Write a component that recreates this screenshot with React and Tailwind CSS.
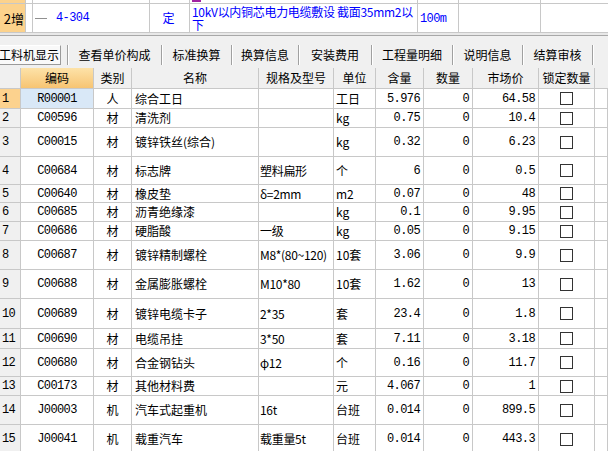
import React from "react";

const rows = [
  { n: "1", code: "R00001", t: "人", name: "综合工日", spec: "", unit: "工日", qty: "5.976", num: "0", price: "64.58", h: "h-[20px]", sel: true },
  { n: "2", code: "C00596", t: "材", name: "清洗剂", spec: "", unit: "kg", qty: "0.75", num: "0", price: "10.4", h: "h-[19px]" },
  { n: "3", code: "C00015", t: "材", name: "镀锌铁丝(综合)", spec: "", unit: "kg", qty: "0.32", num: "0", price: "6.23", h: "h-[29px]" },
  { n: "4", code: "C00684", t: "材", name: "标志牌", spec: "塑料扁形", unit: "个", qty: "6", num: "0", price: "0.5", h: "h-[28px]" },
  { n: "5", code: "C00640", t: "材", name: "橡皮垫", spec: "δ=2mm", unit: "m2", qty: "0.07", num: "0", price: "48", h: "h-[18px]" },
  { n: "6", code: "C00685", t: "材", name: "沥青绝缘漆", spec: "", unit: "kg", qty: "0.1", num: "0", price: "9.95", h: "h-[19px]" },
  { n: "7", code: "C00686", t: "材", name: "硬脂酸", spec: "一级", unit: "kg", qty: "0.05", num: "0", price: "9.15", h: "h-[19px]" },
  { n: "8", code: "C00687", t: "材", name: "镀锌精制螺栓", spec: "M8*(80~120)", unit: "10套", qty: "3.06", num: "0", price: "9.9", h: "h-[29px]" },
  { n: "9", code: "C00688", t: "材", name: "金属膨胀螺栓", spec: "M10*80", unit: "10套", qty: "1.62", num: "0", price: "13", h: "h-[29px]" },
  { n: "10", code: "C00689", t: "材", name: "镀锌电缆卡子", spec: "2*35", unit: "套", qty: "23.4", num: "0", price: "1.8", h: "h-[30px]" },
  { n: "11", code: "C00690", t: "材", name: "电缆吊挂", spec: "3*50", unit: "套", qty: "7.11", num: "0", price: "3.18", h: "h-[20px]" },
  { n: "12", code: "C00680", t: "材", name: "合金钢钻头", spec: "φ12", unit: "个", qty: "0.16", num: "0", price: "11.7", h: "h-[28px]" },
  { n: "13", code: "C00173", t: "材", name: "其他材料费", spec: "", unit: "元", qty: "4.067", num: "0", price: "1", h: "h-[19px]" },
  { n: "14", code: "J00003", t: "机", name: "汽车式起重机", spec: "16t", unit: "台班", qty: "0.014", num: "0", price: "899.5", h: "h-[29px]" },
  { n: "15", code: "J00041", t: "机", name: "载重汽车", spec: "载重量5t", unit: "台班", qty: "0.014", num: "0", price: "443.3", h: "h-[29px]" },
];

const tabs = [
  { label: "查看单价构成", w: "w-[94px]" },
  { label: "标准换算", w: "w-[70px]" },
  { label: "换算信息", w: "w-[67px]" },
  { label: "安装费用", w: "w-[73px]" },
  { label: "工程量明细", w: "w-[81px]" },
  { label: "说明信息", w: "w-[70px]" },
  { label: "结算审核", w: "w-[70px]" },
];

const mono = "font-['Liberation_Mono','Noto_Sans_CJK_SC',monospace] text-[12px] tracking-[-0.6px]";
const cell = "h-full flex items-center border-r border-[#c8c8c8] shrink-0 overflow-hidden whitespace-nowrap";

const App = () => {
  return (
    <div className="w-[608px] h-[451px] overflow-hidden bg-white text-[12px] leading-none text-black font-['Noto_Sans_CJK_SC',sans-serif]">

      {/* top quota row */}
      <div className="flex h-[4px] border-b border-[#c8c8c8]">
        <div className="w-[26px] border-r border-[#c8c8c8] bg-[#fcd28c]"></div>
        <div className="w-[7px] border-r border-[#c8c8c8]"></div>
        <div className="w-[117px] border-r border-[#c8c8c8]"></div>
        <div className="w-[40px] border-r border-[#c8c8c8]"></div>
        <div className="w-[228px] border-r border-[#c8c8c8] pl-[2px]">
          <div className="w-[9px] h-[2px] bg-[#a020a0]"></div>
        </div>
        <div className="w-[41px] border-r border-[#c8c8c8]"></div>
        <div className="w-[82px] border-r border-[#c8c8c8]"></div>
        <div className="flex-1"></div>
      </div>
      <div className="flex h-[29px] border-b border-[#c8c8c8] text-[#0000ff]">
        <div className="w-[26px] border-r border-[#c8c8c8] bg-[#fcd28c] flex items-center justify-end pr-[1px] overflow-hidden whitespace-nowrap text-black">
          <span className="text-[13px]">2增</span>
        </div>
        <div className="w-[7px] border-r border-[#c8c8c8]"></div>
        <div className="w-[117px] border-r border-[#c8c8c8] flex items-center pl-[2px] gap-[9px]">
          <div className="w-[12px] h-px bg-[#909090]"></div>
          <span className={mono}>4-304</span>
        </div>
        <div className="w-[40px] border-r border-[#c8c8c8] flex items-center justify-center pr-[2px]">定</div>
        <div className="w-[228px] border-r border-[#c8c8c8] flex items-center pl-[2px] pr-[2px] tracking-[-0.3px]">
          <p className="leading-[13px]">10kV以内铜芯电力电缆敷设 截面35mm2以下</p>
        </div>
        <div className="w-[41px] border-r border-[#c8c8c8] flex items-center pl-[2px] pt-[2px]">
          <span className={mono}>100m</span>
        </div>
        <div className="w-[82px] border-r border-[#c8c8c8]"></div>
        <div className="flex-1"></div>
      </div>
      <div className="h-[3px] bg-[#e8e8e8] border-b border-[#a8a8a8]"></div>

      {/* tab bar */}
      <div className="h-[32px] bg-[#f0f0f0] flex items-start pt-[9px]">
        <div className="w-[71px] -ml-[3px] h-[20px] flex items-center border-r border-[#a0a0a0] shadow-[1px_0_0_#fff]">
          <div className="w-[64px] h-[20px] flex items-center justify-center bg-[#f9f9f9] border border-t-white border-l-white border-r-[#9a9a9a] border-b-[#9a9a9a]">
            工料机显示
          </div>
        </div>
        {tabs.map(tab => (
          <div
            key={tab.label}
            className={`${tab.w} h-[20px] flex items-center justify-center border-r border-[#a0a0a0] shadow-[1px_0_0_#fff]`}
          >
            {tab.label}
          </div>
        ))}
      </div>

      {/* material table */}
      <div className="flex flex-col">
        <div className="flex h-[21px] border-b border-[#c8c8c8] bg-[#f0f0f0]">
          <div className={`${cell} w-[21px]`}></div>
          <div className={`${cell} w-[73px] justify-center bg-gradient-to-b from-[#fde2a8] to-[#f7c472]`}>编码</div>
          <div className={`${cell} w-[38px] justify-center`}>类别</div>
          <div className={`${cell} w-[127px] justify-center`}>名称</div>
          <div className={`${cell} w-[75px] justify-center`}>规格及型号</div>
          <div className={`${cell} w-[42px] justify-center`}>单位</div>
          <div className={`${cell} w-[48px] justify-center`}>含量</div>
          <div className={`${cell} w-[49px] justify-center`}>数量</div>
          <div className={`${cell} w-[66px] justify-center`}>市场价</div>
          <div className={`${cell} w-[56px] justify-center`}>锁定数量</div>
          <div className="flex-1"></div>
        </div>

        {rows.map(r => (
          <div key={r.n} className={`flex ${r.h} border-b border-[#c8c8c8]`}>
            <div className={`${cell} w-[21px] pl-[2px] ${r.sel ? "bg-[#fcd28e]" : "bg-[#f0f0f0]"}`}>
              <span className={mono}>{r.n}</span>
            </div>
            <div className={`${cell} w-[73px] justify-center ${r.sel ? "bg-[#d9e8f7]" : ""}`}>
              <span className={mono}>{r.code}</span>
            </div>
            <div className={`${cell} w-[38px] justify-center`}>{r.t}</div>
            <div className={`${cell} w-[127px] pl-[3px]`}>{r.name}</div>
            <div className={`${cell} w-[75px] pl-[1px] tracking-[-0.3px]`}>{r.spec}</div>
            <div className={`${cell} w-[42px] pl-[2px]`}>{r.unit}</div>
            <div className={`${cell} w-[48px] justify-end pr-[3px]`}>
              <span className={mono}>{r.qty}</span>
            </div>
            <div className={`${cell} w-[49px] justify-end pr-[3px]`}>
              <span className={mono}>{r.num}</span>
            </div>
            <div className={`${cell} w-[66px] justify-end pr-[3px]`}>
              <span className={mono}>{r.price}</span>
            </div>
            <div className={`${cell} w-[56px] justify-center`}>
              <div className="w-[13px] h-[13px] border border-[#333] bg-white"></div>
            </div>
            <div className="flex-1 border-r border-[#c8c8c8]"></div>
          </div>
        ))}
      </div>
    </div>
  );
};

export default App;
